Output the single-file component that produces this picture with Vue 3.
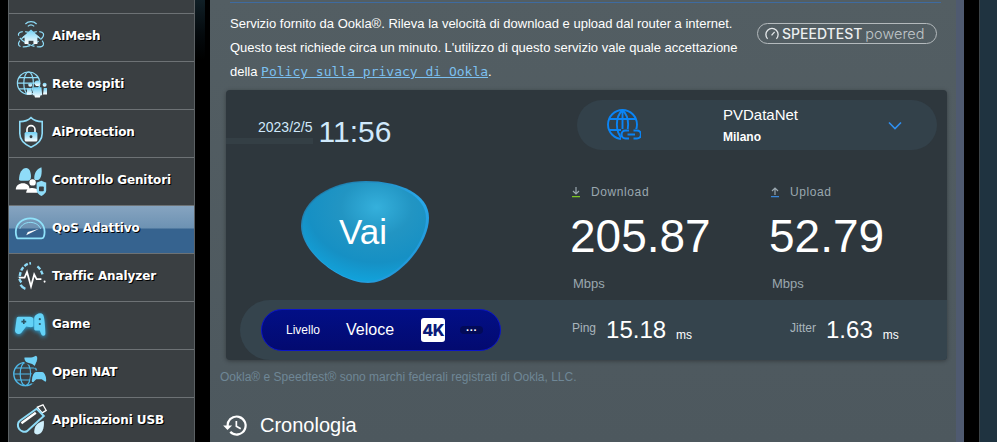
<script setup>
const menu = [
  { id: 'mesh', label: 'AiMesh' },
  { id: 'guest', label: 'Rete ospiti' },
  { id: 'protect', label: 'AiProtection' },
  { id: 'parent', label: 'Controllo Genitori' },
  { id: 'qos', label: 'QoS Adattivo', active: true },
  { id: 'traffic', label: 'Traffic Analyzer' },
  { id: 'game', label: 'Game' },
  { id: 'nat', label: 'Open NAT' },
  { id: 'usb', label: 'Applicazioni USB' }
]
</script>

<template>
  <div class="page">
    <aside class="side">
      <div class="stub"></div>
      <div v-for="item in menu" :key="item.id" class="item" :class="{ active: item.active }">
        <svg class="ico" :class="item.id" viewBox="0 0 40 40" fill="none" stroke="#8fdcf8" stroke-width="2">
          <defs>
            <linearGradient id="ig" x1="0" y1="0" x2="0" y2="1">
              <stop offset="0" stop-color="#6fd0f5" />
              <stop offset="1" stop-color="#ffffff" />
            </linearGradient>
          </defs>
          <template v-if="item.id === 'mesh'">
            <path d="M13 5a10 10 0 0 1 14 0M16 8a6 6 0 0 1 8 0" stroke-width="1.5" />
            <ellipse cx="20" cy="24" rx="17" ry="7" transform="rotate(25 20 24)" stroke-dasharray="9 3" stroke-width="1.5" />
            <ellipse cx="20" cy="24" rx="17" ry="7" transform="rotate(-25 20 24)" stroke-dasharray="9 3" stroke-width="1.5" />
            <path d="M20 12l11 10h-3v8H12v-8H9z" fill="url(#ig)" stroke="none" />
            <path d="M17 30v-4h6v4z" fill="#3a3f42" stroke="none" />
          </template>
          <template v-else-if="item.id === 'guest'">
            <circle cx="17" cy="19" r="14" stroke-width="1.5" />
            <ellipse cx="17" cy="19" rx="6" ry="14" stroke-width="1.5" />
            <path d="M3 19h28M5 12h24M5 26h24" stroke-width="1.5" />
            <circle cx="28" cy="19" r="3.5" fill="url(#ig)" stroke="none" />
            <circle cx="19" cy="21" r="2.5" fill="url(#ig)" stroke="none" />
            <circle cx="37" cy="21" r="2.5" fill="url(#ig)" stroke="none" />
            <path d="M23 24h10l1 10h-2l-1 3h-6l-1-3h-2z" fill="url(#ig)" stroke="none" />
            <path d="M15 25h5l1 8h-6zM36 25h4v8h-5z" fill="url(#ig)" stroke="none" />
          </template>
          <template v-else-if="item.id === 'protect'">
            <path d="M20 2c3 3 8 5 14 5v15c0 9-7 14-14 17C13 36 6 31 6 22V7c6 0 11-2 14-5z" />
            <path d="M15 20v-3a5 5 0 0 1 10 0v3" stroke="#fff" />
            <rect x="12" y="20" width="16" height="12" rx="2" fill="url(#ig)" stroke="none" />
            <circle cx="20" cy="26" r="1.8" fill="#3a3f42" stroke="none" />
          </template>
          <template v-else-if="item.id === 'parent'">
            <path d="M5 20c0-9 4-15 9-15 4 0 6 5 6 11 0 3-2 5-4 5H7z" fill="#8fdcf8" stroke="none" />
            <path d="M24 18c0-8 4-12 9-14 1 7 0 14-4 16h-4z" fill="#8fdcf8" stroke="none" />
            <circle cx="22" cy="23" r="4" fill="#fff" stroke="none" />
            <path d="M1 32c0-5 4-8 9-8s8 3 8 6v2zM14 36c0-4 3-6 8-6 2 0 5 1 6 2v4z" fill="#fff" stroke="none" />
            <path d="M33 21c2 1 4 2 6 2v10c0 3-3 5-6 7-3-2-6-4-6-7V23c2 0 4-1 6-2z" fill="#8fdcf8" stroke="none" />
            <rect x="30" y="28" width="6" height="6" rx="1" fill="#3a3f42" stroke="none" />
          </template>
          <template v-else-if="item.id === 'qos'">
            <path d="M3 33h30c1.5 0 2.5-.6 3-2 .7-2 1-4 1-6C37 15 29 8 19 8S1 15 1 25c0 2 .3 4 1 6 .3 1.4.6 2 1 2z" stroke="#8fe2fa" stroke-width="2.2" />
            <path d="M6 21c2-5 7-8 13-8s11 3 13 8" stroke="#8fe2fa" stroke-width="1.2" />
            <path d="M14 29l16-8-14 4z" fill="#fff" stroke="none" />
          </template>
          <template v-else-if="item.id === 'traffic'">
            <path d="M6 20C7 11 12 5 20 4M8 28c-2-2-3-5-3-7M28 8c4 3 6 8 7 12" stroke-width="3" stroke-dasharray="5 2" />
            <path d="M5 22h7l3-7 5 18 4-15 3 6h6" stroke="#fff" stroke-width="2.2" />
            <path d="M13 36c-3-1-5-3-6-5" stroke-width="3" />
            <circle cx="37" cy="27" r="1.3" fill="#fff" stroke="none" />
          </template>
          <template v-else-if="item.id === 'game'">
            <path d="M4 11h15c2 0 3 1 4 2v10l-3 1-6-1-6 8c-3 3-8 1-8-3l2-15c0-1 1-2 2-2z" fill="#63d2f7" stroke="none" />
            <path d="M27 8c3-2 6-2 8 0 2 2 3 20 3 24 0 3-3 4-5 1l-2-5h-5c-2 0-2-1-2-2V13c0-2 1-4 3-5z" fill="#63d2f7" stroke="none" />
            <path d="M8 17h6M11 14v6" stroke="#2c5566" />
            <circle cx="31" cy="14" r="1.4" fill="#2c5566" stroke="none" />
            <circle cx="31" cy="20" r="1.4" fill="#2c5566" stroke="none" />
          </template>
          <template v-else-if="item.id === 'nat'">
            <circle cx="13" cy="22.5" r="14.5" stroke="#4fb8e8" stroke-width="1.8" />
            <ellipse cx="13" cy="22.5" rx="6.5" ry="14.5" stroke="#4fb8e8" stroke-width="1.5" />
            <path d="M-1 22.5h28M1 15h24M1 30h24" stroke="#4fb8e8" stroke-width="1.5" />
            <path d="M11 1h9c3 0 5-3 7-2 2 1 2 5 1 8l-3 7-4-3-6-2c-3-1-5-5-4-8z" fill="#6fd0f5" stroke="#3a3f42" />
            <path d="M26 19h8c3 0 6 5 6 11 0 3-2 4-4 2l-3-2h-6l-3 3c-2 1-4 1-4-2 0-6 3-12 6-12z" fill="#6fd0f5" stroke="#3a3f42" />
          </template>
          <template v-else>
            <path d="M28 4l7-3 4 7-5 3z" stroke="#fff" stroke-width="1.6" />
            <path d="M27 6L6 21c-3 2-3 7-1 10 2 3 7 5 10 3l21-19z" stroke="#8fdcf8" stroke-width="2.5" />
            <path d="M8 24l18-13" stroke="#fff" stroke-width="3" />
            <path d="M24 35c0-7 4-12 12-14 1 9-2 17-8 17-2 0-4-1-4-3z" fill="#cfeffb" stroke="none" />
          </template>
        </svg>
        <span class="lbl">{{ item.label }}</span>
      </div>
    </aside>
    <div class="seam"></div>

    <main class="panel">
      <div class="rule"></div>
      <section class="intro">
        <p class="desc">
          Servizio fornito da Ookla®. Rileva la velocità di download e upload dal router a internet.<br>
          Questo test richiede circa un minuto. L'utilizzo di questo servizio vale quale accettazione<br>
          della <a class="link">Policy sulla privacy di Ookla</a>.
        </p>
        <div class="badge">
          <svg class="gauge" viewBox="0 0 16 16" fill="none" stroke="#e4e8ea" stroke-width="1.5">
            <path d="M3 13.5A7 7 0 1 1 13 13.5" />
            <path d="M7.5 9.5l3.5-4" />
          </svg>
          <span class="st">SPEEDTEST</span>
          <span class="pw">powered</span>
        </div>
      </section>

      <section class="card">
        <div class="top">
          <div class="strip"></div>
          <div class="when">
            <span class="date">2023/2/5</span>
            <span class="time">11:56</span>
          </div>
          <div class="server">
            <svg class="globe" viewBox="0 0 34 32" fill="none" stroke="#0a84f5" stroke-width="1.9">
              <circle cx="15.5" cy="15.5" r="14.5" />
              <path d="M15.5 1C8 8 8 23 15.5 30M15.5 1C23 8 23 23 15.5 30M15.5 1v29M2.5 10h26M2 21h27" />
              <rect x="14" y="20" width="22" height="13" fill="#33414a" stroke="none" />
              <path d="M22 21.5h-3.500a4 4 0 0 0 0 8H22M26.500 21.500H30a4 4 0 0 1 0 8h-3.500M20.500 25.500h7.500" stroke-width="2.200" />
            </svg>
            <div class="srv-text">
              <div class="srv-name">PVDataNet</div>
              <div class="srv-city">Milano</div>
            </div>
            <svg class="chev" viewBox="0 0 14 9" fill="none" stroke="#2f8ff0" stroke-width="1.6">
              <path d="M1 1.5l6 6 6-6" />
            </svg>
          </div>
        </div>

        <div class="mid">
          <div class="go">
            <svg class="stone" viewBox="0 0 130 104" preserveAspectRatio="none">
              <defs>
                <radialGradient id="sf" cx="0.6" cy="0.25" r="0.82">
                  <stop offset="0" stop-color="#35b0dc" />
                  <stop offset="0.35" stop-color="#2295c3" />
                  <stop offset="0.68" stop-color="#1690c4" />
                  <stop offset="1" stop-color="#10a8e2" />
                </radialGradient>
                <linearGradient id="se" x1="0" y1="0" x2="1" y2="1">
                  <stop offset="0" stop-color="#1c6f97" />
                  <stop offset="0.55" stop-color="#29a8ea" />
                  <stop offset="1" stop-color="#1d8fd0" />
                </linearGradient>
              </defs>
              <path d="M1 46C1 20 32 2 66 2c34 0 63 13 63 36 0 27-33 64-61 64C40 102 1 72 1 46z" fill="url(#se)" />
              <path d="M2.500 46C2.500 21 32 3.500 65 3.500c33 0 61 13 61 35 0 27-32 62-60 62C39 100.500 2.500 72 2.500 46z" fill="url(#sf)" />
            </svg>
            <span class="vai">Vai</span>
          </div>
          <div class="speed">
            <div class="col">
              <div class="head">
                <svg class="arrow" viewBox="0 0 8 11">
                  <path d="M4 0v6M1 4l3 3 3-3" fill="none" stroke="#9aa7af" stroke-width="1.2" />
                  <path d="M0 9.600h8" stroke="#7cc522" stroke-width="1.400" />
                </svg>
                <span>Download</span>
              </div>
              <div class="num">205.87</div>
              <div class="unit">Mbps</div>
            </div>
            <div class="col">
              <div class="head">
                <svg class="arrow" viewBox="0 0 8 11">
                  <path d="M4 8V2M1 4l3-3 3 3" fill="none" stroke="#9aa7af" stroke-width="1.2" />
                  <path d="M0 9.600h8" stroke="#3a86d8" stroke-width="1.400" />
                </svg>
                <span>Upload</span>
              </div>
              <div class="num">52.79</div>
              <div class="unit">Mbps</div>
            </div>
          </div>
        </div>

        <div class="bar">
          <div class="level">
            <span class="lv">Livello</span>
            <span class="fast">Veloce</span>
            <span class="k4">4K</span>
            <span class="dots">···</span>
          </div>
          <div class="lat ping">
            <span class="lat-l">Ping</span>
            <span class="lat-n">15.18</span>
            <span class="lat-u">ms</span>
          </div>
          <div class="lat jit">
            <span class="lat-l">Jitter</span>
            <span class="lat-n">1.63</span>
            <span class="lat-u">ms</span>
          </div>
        </div>
      </section>

      <p class="note">Ookla® e Speedtest® sono marchi federali registrati di Ookla, LLC.</p>

      <div class="hist">
        <svg class="clock" viewBox="0 0 24 24" fill="#fff">
          <path d="M13 3a9 9 0 0 0-9 9H1l3.900 3.900L9 12H6a7 7 0 1 1 2.050 4.950l-1.420 1.420A9 9 0 1 0 13 3zm-1 5v5l4.280 2.540.72-1.210-3.500-2.080V8z" />
        </svg>
        <span>Cronologia</span>
      </div>
      <div class="next"></div>
    </main>

    <div class="gutter"></div>
    <div class="far"></div>
  </div>
</template>

<style scoped>
.page {
  width: 997px;
  height: 442px;
  overflow: hidden;
  display: flex;
  background: #000;
  font-family: "Liberation Sans", Arial, sans-serif;
  color: #fff;
}

.side {
  width: 187px;
  margin-left: 8px;
  flex: none;
  background: #3a3f42;
  border-left: 1px solid #5c6164;
  border-right: 1px solid #5c6164;
  box-sizing: border-box;
}

.seam {
  width: 10px;
  margin-right: 5px;
  flex: none;
  background: linear-gradient(180deg, #101f26 0, #04090c 35px, #000 60px);
}

.stub {
  height: 13px;
}

.item {
  height: 48px;
  box-sizing: border-box;
  border-top: 1px solid #6d7275;
  padding-bottom: 4px;
  display: flex;
  align-items: center;
}

.item.active {
  background: linear-gradient(180deg, #86a4c0 0, #6d92b3 22px, #36638f 23px, #36638f 100%);
}

.ico {
  width: 32px;
  height: 32px;
  margin-left: 6px;
  flex: none;
  overflow: visible;
}

.ico.game {
  filter: drop-shadow(0 1px 2px #2aa9e0);
}

.lbl {
  margin-left: 5px;
  font-family: "DejaVu Sans", Verdana, sans-serif;
  font-weight: 700;
  font-size: 12px;
  letter-spacing: -0.1px;
  color: #fff;
  text-shadow: 1px 1px 0 #000;
  white-space: nowrap;
}

.panel {
  width: 746px;
  flex: none;
  background: linear-gradient(180deg, #535e63, #4d585e);
  box-sizing: border-box;
  padding: 2px 9px 0 16px;
}

.rule {
  height: 1px;
  background: #3f6ba0;
  margin: 0 6px 0 4px;
}

.intro {
  display: flex;
  justify-content: space-between;
  align-items: flex-start;
  padding: 9px 10px 0 4px;
  height: 76px;
  box-sizing: border-box;
}

.desc {
  margin: 0;
  font-size: 13px;
  line-height: 24px;
  color: #fff;
  white-space: nowrap;
}

.link {
  font-family: "DejaVu Sans Mono", monospace;
  font-size: 13px;
  color: #7cc0f0;
  text-decoration: underline;
}

.badge {
  margin-top: 11px;
  width: 180px;
  height: 21px;
  box-sizing: border-box;
  border: 1px solid #b4babd;
  border-radius: 11px;
  display: flex;
  align-items: center;
  padding-left: 7px;
  gap: 3px;
  font-family: Inter, sans-serif;
  white-space: nowrap;
}

.gauge {
  width: 14px;
  height: 14px;
  flex: none;
}

.st {
  font-size: 14px;
  font-weight: 500;
  color: #eceff0;
}

.pw {
  font-size: 14.5px;
  font-weight: 300;
  color: #c0c6c9;
}

.card {
  width: 721px;
  height: 270px;
  margin-top: 11px;
  border-radius: 4px;
  background: #2e373d;
  box-shadow: 0 1px 4px rgba(0, 0, 0, 0.35);
  display: flex;
  flex-direction: column;
  overflow: hidden;
}

.top {
  height: 70px;
  flex: none;
  display: flex;
  justify-content: space-between;
  padding: 10px 10px 0 32px;
  box-sizing: border-box;
  position: relative;
}

.strip {
  position: absolute;
  left: 0;
  top: 48px;
  width: 87px;
  height: 6px;
  background: #343f45;
}

.when {
  display: flex;
  align-items: flex-start;
  gap: 6px;
  color: #d0e9fb;
  padding-top: 19px;
  position: relative;
}

.date {
  font-size: 14px;
  line-height: 16px;
}

.time {
  font-size: 30px;
  line-height: 34px;
  margin-top: -4px;
}

.server {
  width: 360px;
  height: 50px;
  border-radius: 25px;
  background: #33414a;
  display: flex;
  align-items: center;
}

.globe {
  width: 34px;
  height: 32px;
  margin-left: 30px;
  flex: none;
}

.srv-text {
  margin-left: 82px;
}

.srv-name {
  font-size: 15px;
  line-height: 20px;
}

.srv-city {
  font-size: 12px;
  font-weight: 700;
  line-height: 18px;
  margin-top: 3px;
}

.chev {
  width: 14px;
  height: 9px;
  margin-left: auto;
  margin-right: 35px;
  flex: none;
}

.mid {
  height: 140px;
  flex: none;
  display: flex;
}

.go {
  width: 345px;
  flex: none;
  display: grid;
  align-items: start;
  justify-items: start;
}

.stone,
.vai {
  grid-area: 1 / 1;
}

.stone {
  width: 130px;
  height: 106px;
  margin: 19px 0 0 74px;
}

.vai {
  margin: 52px 0 0 113px;
  font-size: 35px;
  line-height: 40px;
  color: #fff;
}

.speed {
  display: flex;
  padding-top: 24px;
}

.col {
  width: 199px;
}

.head {
  display: flex;
  align-items: center;
  gap: 11px;
  font-size: 12px;
  letter-spacing: 0.6px;
  color: #9aa7af;
  height: 16px;
  padding-left: 1px;
}

.arrow {
  width: 8px;
  height: 11px;
  flex: none;
}

.num {
  font-size: 46px;
  line-height: 54px;
  margin: 9px 0 0 -1px;
}

.unit {
  font-size: 13px;
  color: #9aa7af;
  margin: 13px 0 0 2px;
}

.bar {
  flex: 1;
  margin-left: 14px;
  background: #35444d;
  border-radius: 30px 0 0 30px;
  display: flex;
  align-items: center;
  padding-left: 21px;
}

.level {
  width: 240px;
  height: 42px;
  box-sizing: border-box;
  border: 1px solid #0a14c8;
  border-radius: 21px;
  background: linear-gradient(180deg, #020f86, #030a70);
  display: flex;
  align-items: center;
  padding-left: 24px;
  flex: none;
}

.lv {
  font-size: 12px;
}

.fast {
  font-size: 16px;
  margin-left: 26px;
}

.k4 {
  width: 24px;
  height: 24px;
  margin-left: 27px;
  border-radius: 3px;
  background: #fff;
  color: #0a1a78;
  font-family: Inter, sans-serif;
  font-weight: 800;
  font-size: 16px;
  letter-spacing: -0.5px;
  display: flex;
  align-items: center;
  justify-content: center;
}

.dots {
  width: 23px;
  height: 8px;
  margin-left: 15px;
  border-radius: 4px;
  background: #020a58;
  font-size: 11px;
  font-weight: 700;
  line-height: 8px;
  text-align: center;
}

.lat {
  display: flex;
  align-items: baseline;
}

.ping {
  margin-left: 71px;
  width: 218px;
}

.lat-l {
  font-size: 12px;
  color: #a9b5bc;
  position: relative;
  top: -6px;
}

.lat-n {
  font-size: 24px;
  margin-left: 10px;
}

.lat-u {
  font-size: 12px;
  margin-left: 10px;
  position: relative;
  top: 1px;
}

.note {
  margin: 9px 0 0 -6px;
  font-size: 12px;
  line-height: 16px;
  color: #6f8796;
}

.hist {
  display: flex;
  align-items: center;
  gap: 11px;
  margin: 27px 0 0 -4px;
  font-size: 20px;
}

.clock {
  width: 27px;
  height: 27px;
  flex: none;
}

.next {
  width: 721px;
  height: 20px;
  margin-top: 3px;
  background: #2e373d;
}

.gutter {
  width: 8px;
  flex: none;
  background: #4f5a70;
}

.far {
  flex: 1;
  margin-left: 15px;
  background: #1f3340;
  border-left: 1px solid #3a4247;
}
</style>
